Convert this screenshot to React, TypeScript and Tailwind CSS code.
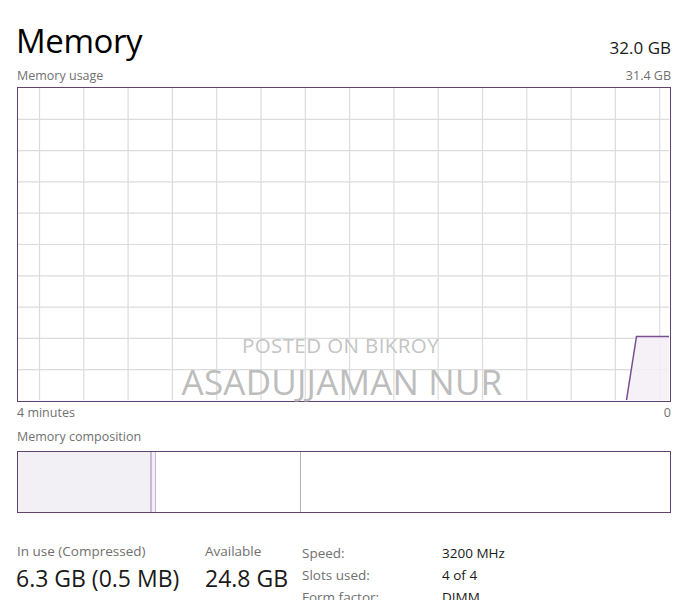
import React from "react";

const font = { fontFamily: '"Open Sans", "Noto Sans", sans-serif' };

function UsageChart() {
  const w = 651;
  const h = 312;
  const vx: number[] = [];
  for (let x = 21.5; x < w - 5; x += 44.3) vx.push(x);
  const hy: number[] = [];
  for (let k = 1; k < 10; k++) hy.push(k * 31.3);
  return (
    <svg width={w} height={h} viewBox={`0 0 ${w} ${h}`} className="block">
      {vx.map((x) => (
        <line key={"v" + x} x1={x} y1={0} x2={x} y2={h} stroke="#dcdcdc" strokeWidth={1.2} />
      ))}
      {hy.map((y) => (
        <line key={"h" + y} x1={0} y1={y} x2={w} y2={y} stroke="#dcdcdc" strokeWidth={1.2} />
      ))}
      <polygon points={`608.5,${h} 618.5,248.5 ${w},248.5 ${w},${h}`} fill="#f3eef6" fillOpacity={0.85} />
      <polyline points={`608.5,${h} 618.5,248.5 ${w},248.5`} fill="none" stroke="#7a4f92" strokeWidth={1.5} />
    </svg>
  );
}

export default function App() {
  return (
    <div className="w-[683px] h-[600px] overflow-hidden bg-white pl-[17px] pr-[12px] pt-[20px] text-[#1a1a1a]" style={font}>
      <div className="flex items-end justify-between">
        <div className="text-[33px] leading-[42px] tracking-[-0.4px] text-black -ml-[1px]">Memory</div>
        <div className="text-[17px] leading-[22px] mb-[3px] text-[#1a1a1a]">32.0 GB</div>
      </div>
      <div className="flex justify-between text-[12.5px] leading-[18px] text-[#707070] mt-[5px]">
        <span>Memory usage</span>
        <span>31.4 GB</span>
      </div>
      <div className="relative mt-[2px] w-[654px] h-[315px] border-[1.5px] border-[#5f4270] bg-white">
        <UsageChart />
        <div className="absolute inset-0 flex flex-col items-center pt-[245px] pr-[4px] pointer-events-none">
          <div className="text-[20.5px] leading-[24px] text-[#c4c4c4] tracking-[0.4px] -ml-[3px]">POSTED ON BIKROY</div>
          <div className="text-[35px] leading-[42px] text-[#bdbdbd] mt-[4px] tracking-[0.2px]">ASADUJJAMAN NUR</div>
        </div>
      </div>
      <div className="flex justify-between w-[654px] text-[12.5px] leading-[18px] text-[#707070] mt-[2px]">
        <span>4 minutes</span>
        <span>0</span>
      </div>
      <div className="text-[12.5px] leading-[18px] text-[#707070] mt-[6px]">Memory composition</div>
      <div className="mt-[5px] w-[654px] h-[62px] border-[1.5px] border-[#5f4270] flex bg-white">
        <div className="w-[132px] h-full bg-[#f3f0f5]" />
        <div className="w-[1.5px] h-full bg-[#cbb8d6]" />
        <div className="w-[3px] h-full bg-[#f3f0f5]" />
        <div className="w-[1.5px] h-full bg-[#cbb8d6]" />
        <div className="w-[144px] h-full" />
        <div className="w-[1px] h-full bg-[#b7abbd]" />
        <div className="flex-1 h-full" />
      </div>
      <div className="flex mt-[29px]">
        <div className="w-[188px]">
          <div className="text-[13.5px] leading-[18px] text-[#707070]">In use (Compressed)</div>
          <div className="text-[23px] leading-[28px] text-[#1a1a1a] mt-[4px] -ml-[1px]">6.3 GB (0.5 MB)</div>
        </div>
        <div className="w-[97px]">
          <div className="text-[13.5px] leading-[18px] text-[#707070]">Available</div>
          <div className="text-[23px] leading-[28px] text-[#1a1a1a] mt-[4px]">24.8 GB</div>
        </div>
        <div className="grid grid-cols-[140px_auto] text-[13.5px] leading-[22px]">
          <span className="text-[#707070]">Speed:</span>
          <span className="text-[#1a1a1a]">3200 MHz</span>
          <span className="text-[#707070]">Slots used:</span>
          <span className="text-[#1a1a1a]">4 of 4</span>
          <span className="text-[#707070]">Form factor:</span>
          <span className="text-[#1a1a1a]">DIMM</span>
        </div>
      </div>
    </div>
  );
}
